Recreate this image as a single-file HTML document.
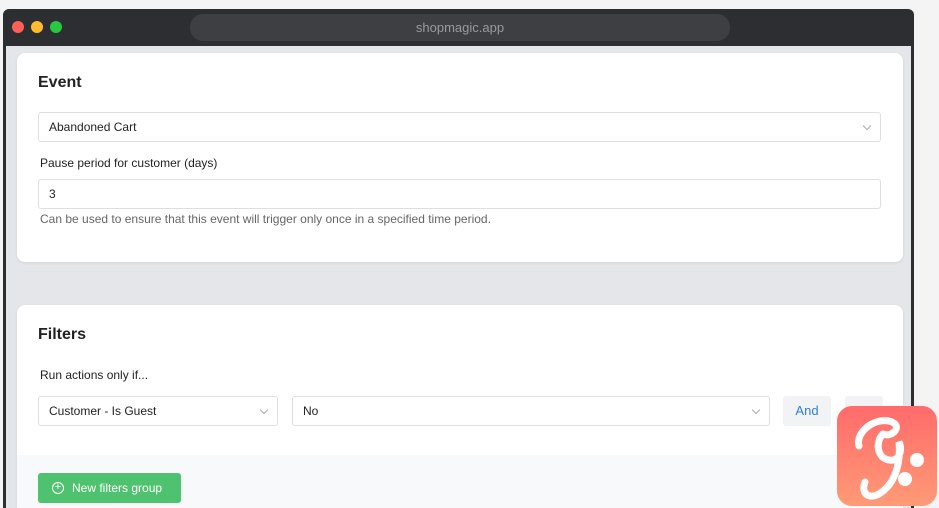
<!DOCTYPE html>
<html style="height:508px;overflow:hidden"><head><meta charset="utf-8"><style>
*{box-sizing:border-box;margin:0;padding:0}
body{width:939px;height:508px;background:#f4f4f4;font-family:"Liberation Sans",sans-serif;position:relative;overflow:hidden}
.win{position:absolute;left:3px;top:9px;width:911px;height:499px;background:#2d2e31;border-radius:6px 6px 0 0;overflow:hidden}
.dot{position:absolute;top:12px;width:12px;height:12px;border-radius:50%}
.url{position:absolute;left:187px;top:5px;width:540px;height:27px;border-radius:13px;background:#3e3f43;color:#9a9a9d;font-size:13px;text-align:center;line-height:27px}
.content{position:absolute;left:3px;top:37px;width:905px;height:462px;background:#e4e6ea;overflow:hidden}
.card{position:absolute;left:11px;width:886px;background:#fff;border-radius:8px;box-shadow:0 1px 3px rgba(0,0,0,.08)}
h2{position:absolute;left:21px;font-size:16px;font-weight:bold;color:#222}
.in{position:absolute;height:30px;border:1px solid #dcdfe3;border-radius:3px;font-size:12px;color:#222;line-height:28px;padding-left:10px;background:#fff}
.chev{position:absolute;right:10px;top:10px;width:6px;height:6px;border-right:1px solid #aaa;border-bottom:1px solid #aaa;transform:rotate(45deg)}
.lbl{position:absolute;left:23px;font-size:12px;color:#222}
</style></head><body>
<div class="win">
<div class="dot" style="left:9px;background:#fe5f57"></div>
<div class="dot" style="left:28px;background:#febc2e"></div>
<div class="dot" style="left:47px;background:#28c840"></div>
<div class="url">shopmagic.app</div>
<div class="content">
<div class="card" style="top:7px;height:209px">
<h2 style="top:21px">Event</h2>
<div class="in" style="left:21px;top:59px;width:843px">Abandoned Cart<div class="chev"></div></div>
<div class="lbl" style="top:103px">Pause period for customer (days)</div>
<div class="in" style="left:21px;top:126px;width:843px">3</div>
<div class="lbl" style="top:159px;color:#666">Can be used to ensure that this event will trigger only once in a specified time period.</div>
</div>
<div class="card" style="top:259px;height:203px;overflow:hidden;border-radius:8px 8px 0 0">
<h2 style="top:21px">Filters</h2>
<div class="lbl" style="top:63px">Run actions only if...</div>
<div class="in" style="left:21px;top:91px;width:240px">Customer - Is Guest<div class="chev"></div></div>
<div class="in" style="left:275px;top:91px;width:478px">No<div class="chev"></div></div>
<div style="position:absolute;left:766px;top:91px;width:48px;height:30px;background:#f1f3f4;border-radius:3px;color:#2f7fe0;font-size:13px;text-align:center;line-height:30px">And</div>
<div style="position:absolute;left:828px;top:91px;width:38px;height:30px;background:#f1f3f4;border-radius:3px"></div>
<div style="position:absolute;left:0;top:150px;width:886px;height:53px;background:#f8f9fb"></div>
<div style="position:absolute;left:21px;top:168px;width:143px;height:30px;background:#4fc26f;border-radius:3px;color:#fff;font-size:12px;line-height:30px;padding-left:34px">New filters group
<div style="position:absolute;left:14px;top:9px;width:12px;height:12px;border:1.3px solid #fff;border-radius:50%;font-size:11px;line-height:9px;text-align:center">+</div></div>
</div>
</div>
</div>
<div style="position:absolute;left:837px;top:406px;width:100px;height:100px;border-radius:15px;background:linear-gradient(#ff6b6b,#ff9a76)">
<svg width="100" height="100" viewBox="0 0 100 100"><path d="M22 40 C18 25 40 10 55 16 C66 21 54 32 46 28 M46 28 C38 36 40 52 52 54 C62 56 66 44 62 36 C64 58 58 78 42 88 C30 94 24 86 28 76" fill="none" stroke="#fff" stroke-width="7" stroke-linecap="round"/><circle cx="80" cy="54" r="7" fill="#fff"/><circle cx="68" cy="73" r="7" fill="#fff"/></svg>
</div>
</body></html>
